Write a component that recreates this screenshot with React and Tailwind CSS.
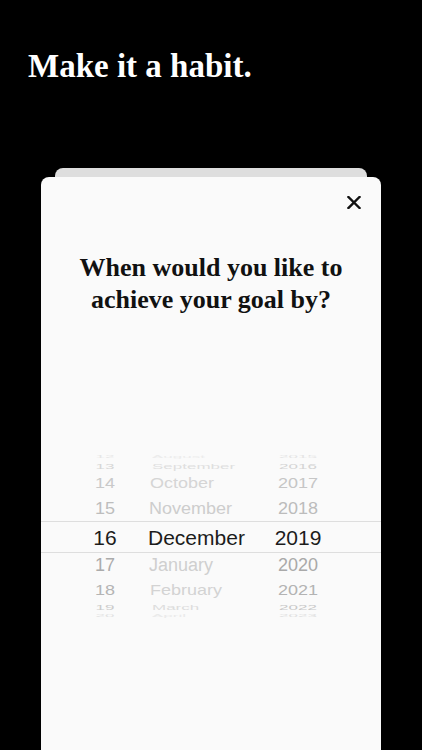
import React from "react";

const rows = [
  { d: "12", m: "August", y: "2015", h: "h-[9px]", fd: "text-[17px] scale-y-[0.2] text-[#e6e6e6]", fm: "text-[17px] scale-y-[0.2] text-[#ececec] pl-[4px]", fy: "text-[17px] scale-y-[0.2] text-[#e4e4e4]" },
  { d: "13", m: "September", y: "2016", h: "h-[11px]", fd: "text-[17px] scale-y-[0.45] text-[#d6d6d6]", fm: "text-[17px] scale-y-[0.45] text-[#dfdfdf] pl-[4px]", fy: "text-[17px] scale-y-[0.45] text-[#d4d4d4]" },
  { d: "14", m: "October", y: "2017", h: "h-[22px]", fd: "text-[18px] scale-y-[0.85] text-[#c9c9c9]", fm: "text-[18px] scale-y-[0.85] text-[#d5d5d5] pl-[2px]", fy: "text-[18px] scale-y-[0.85] text-[#c6c6c6]" },
  { d: "15", m: "November", y: "2018", h: "h-[27px]", fd: "text-[18px] scale-y-[0.95] text-[#bdbdbd]", fm: "text-[18px] scale-y-[0.95] text-[#cdcdcd] pl-[1px]", fy: "text-[18px] scale-y-[0.95] text-[#bcbcbc]" },
];

const rowsBelow = [
  { d: "17", m: "January", y: "2020", h: "h-[24px]", fd: "text-[18px] scale-y-[0.97] text-[#ababab]", fm: "text-[18px] scale-y-[0.97] text-[#cfcfcf] pl-[1px]", fy: "text-[18px] scale-y-[0.97] text-[#a9a9a9]" },
  { d: "18", m: "February", y: "2021", h: "h-[26px]", fd: "text-[18px] scale-y-[0.8] text-[#b4b4b4]", fm: "text-[18px] scale-y-[0.8] text-[#d3d3d3] pl-[2px]", fy: "text-[18px] scale-y-[0.8] text-[#b3b3b3]" },
  { d: "19", m: "March", y: "2022", h: "h-[8px]", fd: "text-[17px] scale-y-[0.45] text-[#cbcbcb]", fm: "text-[17px] scale-y-[0.45] text-[#dddddd] pl-[4px]", fy: "text-[17px] scale-y-[0.45] text-[#c8c8c8]" },
  { d: "20", m: "April", y: "2023", h: "h-[9px]", fd: "text-[17px] scale-y-[0.2] text-[#e2e2e2]", fm: "text-[17px] scale-y-[0.2] text-[#eaeaea] pl-[4px]", fy: "text-[17px] scale-y-[0.2] text-[#e0e0e0]" },
];

function Row({ r }) {
  return (
    <div className={`flex items-center overflow-hidden pl-[40px] ${r.h}`}>
      <div className={`w-[48px] text-center leading-none ${r.fd}`}>{r.d}</div>
      <div className={`ml-[19px] w-[104px] leading-none ${r.fm}`}>{r.m}</div>
      <div className={`ml-[22px] w-[48px] text-center leading-none ${r.fy}`}>{r.y}</div>
    </div>
  );
}

export default function App() {
  return (
    <div className="h-[750px] w-[422px] overflow-hidden bg-black flex flex-col">
      <h1
        className="pl-[28px] pt-[46px] text-[33px] leading-[40px] font-bold text-white"
        style={{ fontFamily: '"Liberation Serif", serif' }}
      >
        Make it a habit.
      </h1>
      <div className="mt-[82px] mx-[55px] h-[9px] rounded-t-[8px] bg-[#dedede]" />
      <div className="mx-[41px] flex-1 rounded-t-[8px] bg-[#fafafa] flex flex-col">
        <div className="flex justify-end pt-[19px] pr-[20px]">
          <svg width="14" height="13" viewBox="0 0 14 13" fill="none">
            <path d="M1.5 1L12.5 12M12.5 1L1.5 12" stroke="#111" strokeWidth="2.4" strokeLinecap="square" />
          </svg>
        </div>
        <p
          className="mt-[43px] text-center text-[26px] leading-[32px] font-bold text-[#111]"
          style={{ fontFamily: '"Liberation Serif", serif' }}
        >
          When would you like to
          <br />
          achieve your goal by?
        </p>
        <div className="mt-[136px] flex flex-col" style={{ fontFamily: '"Liberation Sans", Arial, sans-serif' }}>
          {rows.map((r) => (
            <Row key={r.d} r={r} />
          ))}
          <div className="flex h-[32px] items-center border-y border-[#dedede] pl-[40px]">
            <div className="w-[48px] text-center text-[21px] leading-none text-[#1c1c1c]">16</div>
            <div className="ml-[19px] w-[104px] text-[21px] leading-none text-[#1c1c1c]">December</div>
            <div className="ml-[22px] w-[48px] text-center text-[21px] leading-none text-[#1c1c1c]">2019</div>
          </div>
          {rowsBelow.map((r) => (
            <Row key={r.d} r={r} />
          ))}
        </div>
      </div>
    </div>
  );
}
